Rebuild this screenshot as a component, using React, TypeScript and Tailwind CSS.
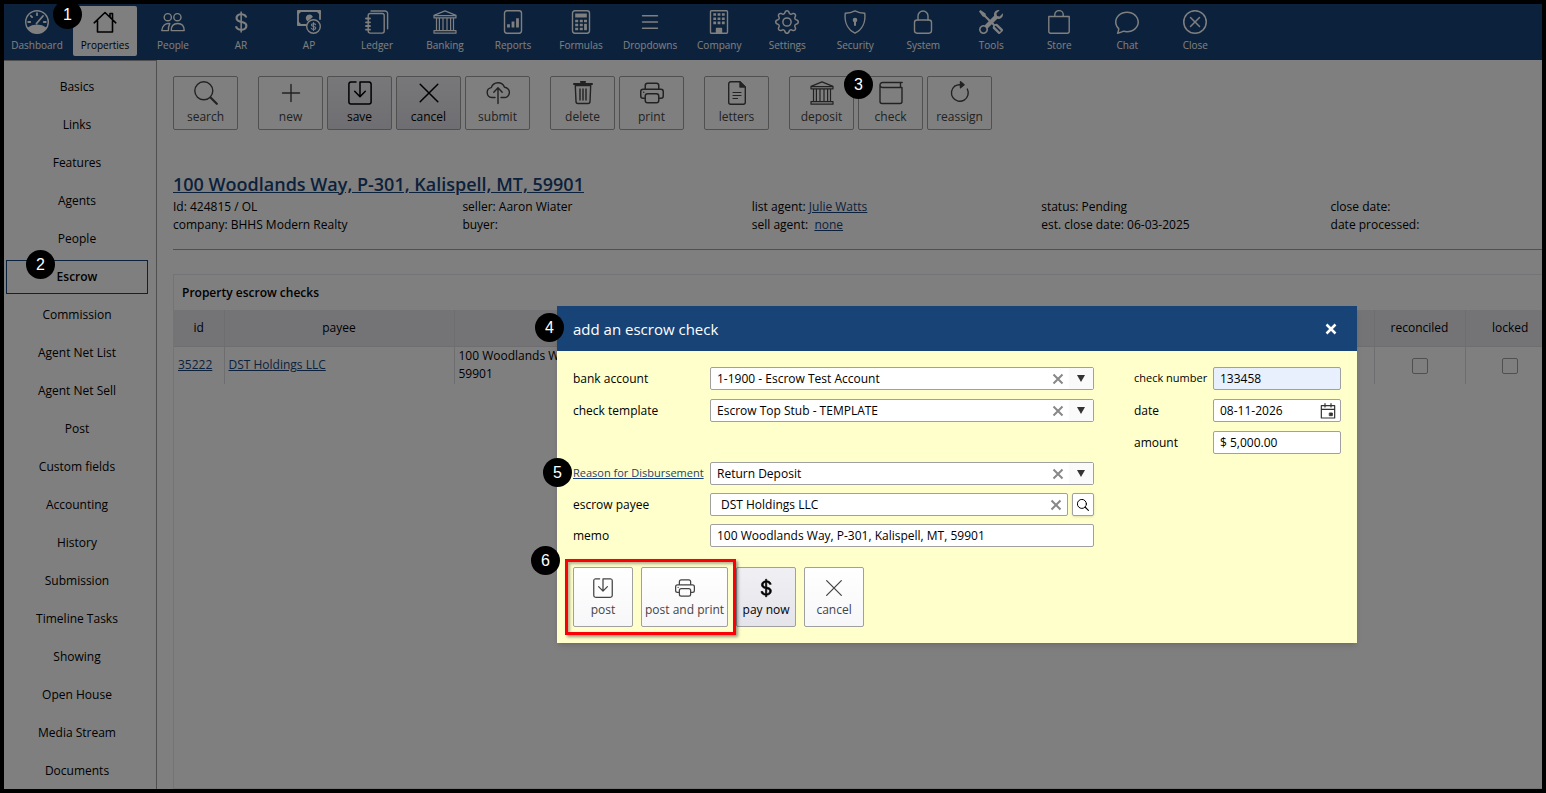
import { ReactElement, ReactNode, useState } from "react";
import { BsChat, BsCurrencyDollar, BsGear, BsPrinter, BsTools, BsXCircle } from "react-icons/bs";

function Svg({ children, className = "size-6" }: { children: ReactNode; className?: string }): ReactElement {
  return (
    <svg
      viewBox="0 0 24 24"
      fill="none"
      stroke="currentColor"
      strokeWidth="1.4"
      strokeLinecap="round"
      strokeLinejoin="round"
      className={className}
      aria-hidden="true"
    >
      {children}
    </svg>
  );
}

const DashboardIcon = () => (
  <Svg>
    <circle cx="12" cy="12" r="11.3" />
    <path d="M3.2 18C8 14.4 16 14.4 20.8 18A10.6 10.6 0 0 1 3.2 18z" fill="currentColor" />
    <path d="M3.2 12h2M5.8 5.8l1.3 1.3M12 3.2v2M20.8 12h-2M11.5 13.5L18 6" strokeWidth="1.8" />
  </Svg>
);

const HomeIcon = () => (
  <Svg>
    <path d="M1.2 12.8L12 2.5l10.8 10.3M4.5 10.5V22h15V10.5M17 7V3.5h2.5v5.8" strokeWidth="1.6" />
  </Svg>
);

const PeopleIcon = () => (
  <Svg>
    <circle cx="6.8" cy="7.2" r="3.6" />
    <circle cx="16.4" cy="7.2" r="3.6" />
    <path d="M8.8 13.6C4.4 12.9 1.3 15.6.8 20.6h6.6M8.8 13.6c-1 1.8-1.5 4-1.4 7" />
    <path d="M10.2 20.6c0-4.6 2.4-7.1 6.5-7.1s6.5 2.5 6.5 7.1z" />
  </Svg>
);

const PayablesIcon = () => (
  <Svg>
    <path d="M9 15H1V1h22v8" strokeWidth="1.8" />
    <path d="M1 1h3L1 4zM23 1h-3l3 3zM1 15v-3l3 3z" fill="currentColor" />
    <path d="M9.5 8.500a3 3 0 0 1 5.600-1.700l-4.600 3.700z" fill="currentColor" />
    <circle cx="16.500" cy="16.500" r="6.800" />
    <path d="M18.600 14.800c-.4-1.600-4.200-1.500-4.100.3.1 1.800 4.300 1 4.300 3 0 1.800-4 1.900-4.500.1M16.500 12.500v8" strokeWidth="1.100" />
  </Svg>
);

const LedgerIcon = () => (
  <Svg>
    <rect x="3.2" y="3.5" width="16" height="19.6" rx="2" />
    <path d="M6 1h14a2.6 2.6 0 0 1 2.6 2.6v15.2" />
    <path d="M1 8.5h4M1 12.3h4M1 16h4M1 19.7h4" strokeWidth="1.8" />
  </Svg>
);

const BankIcon = ({ className }: { className?: string }) => (
  <Svg className={className}>
    <path
      d="M12 .9L23 5.4v2.4H1V5.4zM1 20.6h22v2.6H1zM1 5.6h22M3.5 8v12.4M6.4 8v12.4M10 8v12.4M14 8v12.4M17.6 8v12.4M20.5 8v12.4"
      strokeWidth="1.2"
    />
  </Svg>
);

const ReportsIcon = () => (
  <Svg>
    <rect x="3.5" y=".8" width="17" height="22.4" rx="2.4" />
    <path d="M7.5 17.5v-3.2M12 17.5v-6M16.5 17.5V8.3" strokeWidth="2.8" strokeLinecap="butt" />
  </Svg>
);

const CalculatorIcon = () => (
  <Svg>
    <rect x="3.5" y=".8" width="17" height="22.4" rx="2.4" />
    <path d="M6.2 5.5h11.6" strokeWidth="4" strokeLinecap="butt" />
    <path d="M6.2 11h3M10.8 11h3M15 11h3M6.2 15h3M10.8 15h3M6.2 19h3M10.8 19h3" strokeWidth="2.4" strokeLinecap="butt" />
    <path d="M16.5 13.8v6.4" strokeWidth="2.8" strokeLinecap="butt" />
  </Svg>
);

const ListIcon = () => (
  <Svg>
    <path d="M4.5 5.7h15M4.5 12h15M4.5 18.3h15" />
  </Svg>
);

const CompanyIcon = () => (
  <Svg>
    <rect x="3.5" y=".8" width="17" height="22.4" rx="1" />
    <path
      d="M6.3 4.5h2.8M10.6 4.5h2.8M14.9 4.5h2.8M6.3 8.7h2.8M10.6 8.7h2.8M14.9 8.7h2.8M6.3 12.9h2.8M10.6 12.9h2.8M14.9 12.9h2.8"
      strokeWidth="2.6"
      strokeLinecap="butt"
    />
    <path d="M9.5 18.5h5V23h-5z" fill="currentColor" />
  </Svg>
);

const ShieldIcon = () => (
  <Svg>
    <path d="M12 .9c3 1.7 6.3 2.4 9.8 2.4C22.700 12.5 19 20 12 23.2 5 20 1.3 12.5 2.2 3.3 5.7 3.3 9 2.6 12 .9z" />
    <circle cx="12" cy="10" r="1.6" fill="currentColor" />
    <path d="M12 11v4" strokeWidth="2" />
  </Svg>
);

const LockIcon = () => (
  <Svg>
    <rect x="3.5" y="10" width="17" height="13.2" rx="2.6" />
    <path d="M7 10V6a5 5 0 0 1 10 0v4" />
  </Svg>
);

const StoreIcon = () => (
  <Svg>
    <path d="M1.8 6.5h20.4v14.7a2 2 0 0 1-2 2H3.8a2 2 0 0 1-2-2zM7.8 6.3V4.6a4.2 4 0 0 1 8.4 0v1.7" />
  </Svg>
);

const SearchIcon = ({ className }: { className?: string }) => (
  <Svg className={className}>
    <circle cx="9.8" cy="9.8" r="9" />
    <path d="M16.5 16.5l6.3 6.3" strokeWidth="2.2" />
  </Svg>
);

const PlusIcon = () => (
  <Svg>
    <path d="M12 3.5v17M3.5 12h17" />
  </Svg>
);

const SaveIcon = ({ className }: { className?: string }) => (
  <Svg className={className}>
    <path
      d="M8 .9H3A2.2 2.2 0 0 0 .9 3v18A2.200 2.200 0 0 0 3 23.100h18a2.200 2.200 0 0 0 2.100-2.100V3A2.200 2.200 0 0 0 21 .9h-9v14.500M6.700 10.300l5.300 5.400 5.300-5.400"
      strokeWidth="1.5"
    />
  </Svg>
);

const CancelIcon = ({ className }: { className?: string }) => (
  <Svg className={className}>
    <path d="M3.2 3.2l17.6 17.6M20.8 3.2L3.2 20.8" strokeWidth="1.5" />
  </Svg>
);

const SubmitIcon = () => (
  <Svg>
    <path d="M9 16.500H5.800a5 5 0 0 1-.5-9.900 7 7 0 0 1 13.200-.300 5.100 5.100 0 0 1-.4 10.200H15" />
    <path d="M12 22.5V7M7.800 11.200L12 6.800l4.200 4.400" />
  </Svg>
);

const TrashIcon = () => (
  <Svg>
    <path d="M3 3h18M10 .9h4" strokeWidth="2" />
    <path d="M4.3 4.5l.7 16a2 2 0 0 0 2 2h10a2 2 0 0 0 2-2l.7-16zM9 8v11M12 8v11M15 8v11" />
  </Svg>
);

const LettersIcon = () => (
  <Svg>
    <path d="M15 .8H5.700a2 2 0 0 0-2 2v18.400a2 2 0 0 0 2 2h12.600a2 2 0 0 0 2-2V6z" />
    <path d="M15 1v5h5z" fill="currentColor" />
    <path d="M8 11.5h8M8 14.5h8M8 17.5h4.500" strokeWidth="1.2" />
  </Svg>
);

const CheckIcon = () => (
  <Svg>
    <path d="M23.200 1.500H3.500A2.500 2.500 0 0 0 1 4v16.500a2 2 0 0 0 2 2h18a2 2 0 0 0 2-2V6.500H3.300A2.400 2.400 0 0 1 1 4.100M21.500 1.700v4.600" />
  </Svg>
);

const ReassignIcon = () => (
  <Svg>
    <path d="M6.600 5.300A8.400 8.400 0 1 0 19.300 8" />
    <path d="M6.600 5.300Q9 3.600 12.500 3.800" />
    <path d="M12.500 .8l3.600 3-3.600 3z" fill="currentColor" />
  </Svg>
);

const menu: { label: string; icon: ReactNode }[] = [
  { label: "Dashboard", icon: <DashboardIcon /> },
  { label: "Properties", icon: <HomeIcon /> },
  { label: "People", icon: <PeopleIcon /> },
  { label: "AR", icon: <BsCurrencyDollar className="size-6" /> },
  { label: "AP", icon: <PayablesIcon /> },
  { label: "Ledger", icon: <LedgerIcon /> },
  { label: "Banking", icon: <BankIcon /> },
  { label: "Reports", icon: <ReportsIcon /> },
  { label: "Formulas", icon: <CalculatorIcon /> },
  { label: "Dropdowns", icon: <ListIcon /> },
  { label: "Company", icon: <CompanyIcon /> },
  { label: "Settings", icon: <BsGear className="size-6" /> },
  { label: "Security", icon: <ShieldIcon /> },
  { label: "System", icon: <LockIcon /> },
  { label: "Tools", icon: <BsTools className="size-6" /> },
  { label: "Store", icon: <StoreIcon /> },
  { label: "Chat", icon: <BsChat className="size-6" /> },
  { label: "Close", icon: <BsXCircle className="size-6" /> },
];

const sections = [
  "Basics",
  "Links",
  "Features",
  "Agents",
  "People",
  "Escrow",
  "Commission",
  "Agent Net List",
  "Agent Net Sell",
  "Post",
  "Custom fields",
  "Accounting",
  "History",
  "Submission",
  "Timeline Tasks",
  "Showing",
  "Open House",
  "Media Stream",
  "Documents",
];

const toolbar: { label: string; icon: ReactNode; active?: boolean }[][] = [
  [{ label: "search", icon: <SearchIcon /> }],
  [
    { label: "new", icon: <PlusIcon /> },
    { label: "save", icon: <SaveIcon />, active: true },
    { label: "cancel", icon: <CancelIcon />, active: true },
    { label: "submit", icon: <SubmitIcon /> },
  ],
  [
    { label: "delete", icon: <TrashIcon /> },
    { label: "print", icon: <BsPrinter className="size-6" /> },
  ],
  [{ label: "letters", icon: <LettersIcon /> }],
  [
    { label: "deposit", icon: <BankIcon /> },
    { label: "check", icon: <CheckIcon /> },
    { label: "reassign", icon: <ReassignIcon /> },
  ],
];

function TopMenu() {
  return (
    <nav className="flex h-14 gap-1 bg-[#184377] pt-0.5 pb-1 pl-px text-white">
      {menu.map((item) => (
        <a
          key={item.label}
          href="#"
          className={
            item.label === "Properties"
              ? "flex min-w-16 flex-col items-center gap-1 rounded-xs bg-white px-1.5 pt-1 text-[10px] leading-[14px] text-black"
              : "flex min-w-16 flex-col items-center gap-1 px-1.5 pt-1 text-[10px] leading-[14px]"
          }
        >
          {item.icon}
          {item.label}
        </a>
      ))}
    </nav>
  );
}

function Sidebar() {
  return (
    <aside className="flex w-[153px] shrink-0 flex-col gap-1 border-t border-r border-[#a0a0a0] pt-[9px] pr-2 pl-0.5">
      {sections.map((name) => (
        <a
          key={name}
          href="#"
          className={
            name === "Escrow"
              ? "flex h-[34px] shrink-0 items-center justify-center border border-[#184377] font-semibold"
              : "flex h-[34px] shrink-0 items-center justify-center"
          }
        >
          {name}
        </a>
      ))}
    </aside>
  );
}

function Toolbar() {
  return (
    <div className="flex gap-5">
      {toolbar.map((group, i) => (
        <div key={i} className="flex gap-1">
          {group.map((b) => (
            <button
              key={b.label}
              type="button"
              className={
                b.active
                  ? "flex h-[54px] w-[65px] flex-col items-center gap-1 rounded-xs border border-[#a0a0a0] bg-linear-to-b from-[#f0f0f4] to-[#dedee6] pt-1 text-black"
                  : "flex h-[54px] w-[65px] flex-col items-center gap-1 rounded-xs border border-[#a0a0a0] pt-1 text-[#444]"
              }
            >
              {b.icon}
              {b.label}
            </button>
          ))}
        </div>
      ))}
    </div>
  );
}

function PropertySummary() {
  return (
    <section className="mt-[42px]">
      <h1 className="text-lg leading-6 font-semibold text-[#184377] underline">
        <a href="#">100 Woodlands Way, P-301, Kalispell, MT, 59901</a>
      </h1>
      <div className="mt-0.5 grid grid-cols-5 leading-[18px]">
        <div>
          <p>Id: 424815 / OL</p>
          <p>company: BHHS Modern Realty</p>
        </div>
        <div>
          <p>seller: Aaron Wiater</p>
          <p>buyer:</p>
        </div>
        <div>
          <p>
            list agent: <a href="#" className="text-[#184377] underline">Julie Watts</a>
          </p>
          <p>
            sell agent: &nbsp;<a href="#" className="text-[#184377] underline">none</a>
          </p>
        </div>
        <div>
          <p>status: Pending</p>
          <p>est. close date: 06-03-2025</p>
        </div>
        <div>
          <p>close date:</p>
          <p>date processed:</p>
        </div>
      </div>
      <hr className="mt-[15px] border-[#a0a0a0]" />
    </section>
  );
}

function EscrowChecks() {
  const cell = "border-r border-[#dcdce0] px-1";
  return (
    <section className="mt-6 flex grow flex-col border border-[#e9e9ec]">
      <h2 className="px-2 pt-[9px] pb-2 leading-[18px] font-semibold">Property escrow checks</h2>
      <table className="w-[1381px] table-fixed border-collapse">
        <colgroup>
          <col className="w-[50px]" />
          <col className="w-[230px]" />
          <col className="w-[230px]" />
          <col />
          <col className="w-[91px]" />
          <col className="w-[90px]" />
        </colgroup>
        <thead>
          <tr className="h-[36px] border-b border-[#dcdce0] bg-[#e9e9ee]">
            <th className={`${cell} font-normal`}>id</th>
            <th className={`${cell} font-normal`}>payee</th>
            <td className={cell}></td>
            <td className={cell}></td>
            <th className={`${cell} font-normal`}>reconciled</th>
            <th className="px-1 font-normal">locked</th>
          </tr>
        </thead>
        <tbody>
          <tr className="h-[38px] leading-[18px]">
            <td className={cell}>
              <a href="#" className="text-[#184377] underline">35222</a>
            </td>
            <td className={cell}>
              <a href="#" className="text-[#184377] underline">DST Holdings LLC</a>
            </td>
            <td className={`${cell} whitespace-nowrap`}>
              100 Woodlands Way
              <br />
              59901
            </td>
            <td className={cell}></td>
            <td className={`${cell} text-center`}>
              <input type="checkbox" aria-label="reconciled" className="size-4 appearance-none rounded-xs border border-[#a0a0a0] align-middle" />
            </td>
            <td className="px-1 text-center">
              <input type="checkbox" aria-label="locked" className="size-4 appearance-none rounded-xs border border-[#a0a0a0] align-middle" />
            </td>
          </tr>
        </tbody>
      </table>
    </section>
  );
}

function ClearButton({ label, onClick }: { label: string; onClick: () => void }) {
  return (
    <button type="button" aria-label={label} onClick={onClick} className="flex w-[22px] items-center justify-center text-[#888]">
      <Svg className="size-3">
        <path d="M3 3l18 18M21 3L3 21" strokeWidth="4" strokeLinecap="butt" />
      </Svg>
    </button>
  );
}

function ComboBox({ id, value }: { id: string; value: string }) {
  const [selected, setSelected] = useState(value);
  return (
    <div className="flex h-[23px] rounded-xs border border-[#a0a0a0] bg-white">
      <select
        id={id}
        value={selected}
        onChange={(e) => setSelected(e.target.value)}
        className="min-w-0 grow appearance-none pl-1.5 outline-none"
      >
        <option value={value}>{value}</option>
        <option value=""></option>
      </select>
      <ClearButton label={`clear ${id}`} onClick={() => setSelected("")} />
      <span className="flex w-6 items-center justify-center bg-[#fafafa] text-[#333]">
        <svg viewBox="0 0 8 7" className="h-[7px] w-2 fill-current" aria-hidden="true">
          <path d="M0 0h8L4 7z" />
        </svg>
      </span>
    </div>
  );
}

function EscrowCheckDialog() {
  const [payee, setPayee] = useState("DST Holdings LLC");
  const field = "h-[23px] w-full rounded-xs border border-[#a0a0a0] bg-white px-1.5 outline-none";
  const action =
    "flex h-[60px] min-w-[60px] flex-col items-center gap-0.5 rounded-xs border border-[#a0a0a0] px-[3px] pt-2";
  return (
    <div
      role="dialog"
      aria-label="add an escrow check"
      className="absolute top-[306px] left-[557px] w-[800px] bg-[#ffffcc] shadow-md"
    >
      <header className="flex h-[45px] items-center justify-between bg-[#184377] px-4 text-white">
        <h2 className="text-[15px]">add an escrow check</h2>
        <button type="button" aria-label="close" className="flex w-5 justify-center">
          <Svg className="size-3">
            <path d="M3 3l18 18M21 3L3 21" strokeWidth="5" strokeLinecap="butt" />
          </Svg>
        </button>
      </header>
      <form className="p-4" onSubmit={(e) => e.preventDefault()}>
        <div className="flex gap-10">
          <div className="flex grow flex-col gap-10">
            <div className="grid grid-cols-[137px_1fr] items-center gap-y-[9px]">
              <label htmlFor="bank">bank account</label>
              <ComboBox id="bank" value="1-1900 - Escrow Test Account" />
              <label htmlFor="template">check template</label>
              <ComboBox id="template" value="Escrow Top Stub - TEMPLATE" />
            </div>
            <div className="grid grid-cols-[137px_1fr] items-center gap-y-2">
              <label htmlFor="reason" className="text-[11px] whitespace-nowrap">
                <a href="#" className="text-[#184377] underline">Reason for Disbursement</a>
              </label>
              <ComboBox id="reason" value="Return Deposit" />
              <label htmlFor="payee">escrow payee</label>
              <div className="flex h-[23px] gap-1">
                <div className="flex grow rounded-xs border border-[#a0a0a0] bg-white">
                  <input
                    id="payee"
                    value={payee}
                    onChange={(e) => setPayee(e.target.value)}
                    className="min-w-0 grow pl-2.5 outline-none"
                  />
                  <ClearButton label="clear payee" onClick={() => setPayee("")} />
                </div>
                <button
                  type="button"
                  aria-label="find payee"
                  className="flex w-[22px] items-center justify-center rounded-xs border border-[#a0a0a0] bg-white text-black shadow-sm"
                >
                  <SearchIcon className="size-3 stroke-2" />
                </button>
              </div>
              <label htmlFor="memo">memo</label>
              <input id="memo" defaultValue="100 Woodlands Way, P-301, Kalispell, MT, 59901" className={field} />
            </div>
          </div>
          <div className="grid grid-cols-[79px_128px] content-start items-center gap-y-[9px]">
            <label htmlFor="number" className="text-[11px] whitespace-nowrap">check number</label>
            <input
              id="number"
              defaultValue="133458"
              className="h-[23px] w-full rounded-xs border border-[#a0a0a0] bg-[#e8f0fe] px-1.5 outline-none"
            />
            <label htmlFor="date">date</label>
            <div className="flex h-[23px] items-center rounded-xs border border-[#a0a0a0] bg-white">
              <input id="date" defaultValue="08-11-2026" className="min-w-0 grow pl-1.5 outline-none" />
              <button type="button" aria-label="open calendar" className="flex w-6 shrink-0 justify-center text-[#333]">
                <Svg className="size-4">
                  <path d="M2 4h20v18.5H2zM2 9.5h20M7.5 1v5M16.5 1v5" strokeWidth="1.8" />
                  <path d="M14.5 15h4v4h-4z" fill="currentColor" />
                </Svg>
              </button>
            </div>
            <label htmlFor="amount">amount</label>
            <input id="amount" defaultValue="$ 5,000.00" className={field} />
          </div>
        </div>
        <div className="mt-5 flex gap-2">
          <div className="relative flex gap-2">
            <button type="button" className={`${action} bg-linear-to-b from-white to-[#f7f7f9] text-[#444]`}>
              <SaveIcon className="my-0.5 size-5" />
              post
            </button>
            <button type="button" className={`${action} bg-linear-to-b from-white to-[#f7f7f9] text-[#444]`}>
              <BsPrinter className="my-0.5 size-5" />
              post and print
            </button>
            <span className="pointer-events-none absolute -inset-2 z-10 border-3 border-[#fb0007] shadow-[2px_2px_3px_rgba(0,0,0,0.4),inset_2px_2px_3px_rgba(0,0,0,0.3)]" />
          </div>
          <button type="button" className={`${action} bg-linear-to-b from-[#f0f0f4] to-[#e4e4ea] text-black`}>
            <BsCurrencyDollar className="my-0.5 size-5 stroke-[0.5]" />
            pay now
          </button>
          <button type="button" className={`${action} bg-linear-to-b from-white to-[#f7f7f9] text-[#444]`}>
            <CancelIcon className="my-0.5 size-5" />
            cancel
          </button>
        </div>
      </form>
    </div>
  );
}

// numbered step markers, centred on their spots over the page
const steps = [
  "top-0 left-[53px]",
  "top-[250px] left-[26px]",
  "top-[70px] left-[844px]",
  "top-[313px] left-[535px]",
  "top-[458px] left-[543px]",
  "top-[546px] left-[531px]",
];

export default function App(): ReactElement {
  return (
    <div className="relative flex h-screen flex-col overflow-hidden bg-white font-['Segoe_UI','Open_Sans',sans-serif] text-xs text-black">
      <div className="flex min-h-0 grow flex-col overflow-hidden p-1">
        <TopMenu />
        <div className="flex min-h-0 grow overflow-hidden">
          <Sidebar />
          <main className="flex min-w-0 grow flex-col overflow-hidden pt-4 pl-4">
            <div className="flex min-w-[1447px] grow flex-col">
              <Toolbar />
              <PropertySummary />
              <EscrowChecks />
            </div>
          </main>
        </div>
      </div>
      <div className="absolute inset-0 border-4 border-black bg-black/50" />
      <EscrowCheckDialog />
      {steps.map((place, i) => (
        <span
          key={place}
          className={`absolute z-20 flex size-[29px] items-center justify-center rounded-full bg-black font-['Liberation_Sans',sans-serif] text-base text-white ${place}`}
        >
          {i + 1}
        </span>
      ))}
    </div>
  );
}
